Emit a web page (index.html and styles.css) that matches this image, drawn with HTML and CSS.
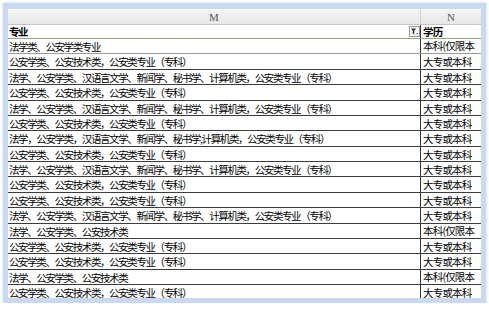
FILE: index.html
```html
<!DOCTYPE html>
<html lang="zh-CN">
<head>
<meta charset="utf-8">
<link rel="stylesheet" href="styles.css">
</head>
<body>
<div class="frame">
  <div class="sheet">
    <div class="row colhead">
      <div class="hcell hm">M</div>
      <div class="hcell hn">N</div>
    </div>
    <div class="row title">
      <div class="cell m">专业<span class="filter"><svg width="11" height="11" viewBox="0 0 11 11"><rect x="0.5" y="0.5" width="10" height="10" fill="#f3f3f3" stroke="#9a9a9a"/><path d="M2 2.5h5L5.2 5v3.5L3.8 7.6V5z" fill="#333"/><path d="M7.2 7.2h2.3L8.35 8.6z" fill="#444"/></svg></span></div>
      <div class="cell n">学历</div>
    </div>
    <div class="row light"><div class="cell m">法学类、公安学类专业</div><div class="cell n wrap">本科(仅限本科)</div></div>
    <div class="row"><div class="cell m">公安学类、公安技术类，公安类专业（专科）</div><div class="cell n">大专或本科</div></div>
    <div class="row"><div class="cell m">法学、公安学类、汉语言文学、新闻学、秘书学、计算机类，公安类专业（专科）</div><div class="cell n">大专或本科</div></div>
    <div class="row"><div class="cell m">公安学类、公安技术类，公安类专业（专科）</div><div class="cell n">大专或本科</div></div>
    <div class="row"><div class="cell m">法学、公安学类、汉语言文学、新闻学、秘书学、计算机类，公安类专业（专科）</div><div class="cell n">大专或本科</div></div>
    <div class="row"><div class="cell m">公安学类、公安技术类，公安类专业（专科）</div><div class="cell n">大专或本科</div></div>
    <div class="row"><div class="cell m">法学，公安学类，汉语言文学、新闻学、秘书学,计算机类，公安类专业（专科）</div><div class="cell n">大专或本科</div></div>
    <div class="row"><div class="cell m">公安学类、公安技术类，公安类专业（专科）</div><div class="cell n">大专或本科</div></div>
    <div class="row"><div class="cell m">法学、公安学类、汉语言文学、新闻学、秘书学、计算机类，公安类专业（专科）</div><div class="cell n">大专或本科</div></div>
    <div class="row"><div class="cell m">公安学类、公安技术类，公安类专业（专科）</div><div class="cell n">大专或本科</div></div>
    <div class="row"><div class="cell m">公安学类、公安技术类，公安类专业（专科）</div><div class="cell n">大专或本科</div></div>
    <div class="row"><div class="cell m">法学、公安学类、汉语言文学、新闻学、秘书学、计算机类，公安类专业（专科）</div><div class="cell n">大专或本科</div></div>
    <div class="row"><div class="cell m">法学、公安学类、公安技术类</div><div class="cell n wrap">本科(仅限本科)</div></div>
    <div class="row"><div class="cell m">公安学类、公安技术类，公安类专业（专科）</div><div class="cell n">大专或本科</div></div>
    <div class="row"><div class="cell m">公安学类、公安技术类，公安类专业（专科）</div><div class="cell n">大专或本科</div></div>
    <div class="row"><div class="cell m">法学、公安学类、公安技术类</div><div class="cell n wrap">本科(仅限本科)</div></div>
    <div class="row"><div class="cell m">公安学类、公安技术类，公安类专业（专科）</div><div class="cell n">大专或本科</div></div>
  </div>
</div>
</body>
</html>
```

FILE: styles.css
```css
html, body {
  margin: 0;
  background: #ffffff;
}

body {
  font-family: "Noto Sans CJK SC", "Liberation Sans", sans-serif;
  color: #000;
}

.frame {
  margin: 3px 0 0 3px;
  width: 483px;
  height: 300px;
  box-sizing: border-box;
  border: 5px solid #c8d9f1;
  border-top-width: 6px;
  background: #fff;
  overflow: hidden;
  box-shadow: 0 0 2px 1px #dfe8f7;
}

.sheet {
  display: flex;
  flex-direction: column;
}

.row {
  display: grid;
  grid-template-columns: 413px 60px;
  height: 15.375px;
  flex: none;
  box-sizing: border-box;
  border-bottom: 1px solid #3c3c3c;
}

.row.light {
  border-bottom-color: #9a9a9a;
}

.cell {
  font-size: 10.5px;
  line-height: 15px;
  overflow: hidden;
  white-space: nowrap;
}

.cell.m {
  padding-left: 1px;
  letter-spacing: -1.4px;
  border-right: 1px solid #333;
}

.cell.n {
  padding-left: 2px;
  letter-spacing: -0.8px;
}

.cell.wrap {
  white-space: normal;
  line-height: 12px;
  padding-top: 1px;
}

.colhead {
  height: 16px;
  border-top: 1px solid #fff;
  border-bottom: 1px solid #c4c4c4;
  background: linear-gradient(#f4f4f4, #e7e7e7);
}

.hcell {
  font-family: "Liberation Serif", serif;
  font-size: 11px;
  line-height: 14px;
  color: #555;
  text-align: center;
}

.hm {
  border-right: 1px solid #d0d0d0;
}

.title {
  height: 14px;
  border-bottom: 1px solid #95a57c;
}

.title .cell {
  font-weight: bold;
  line-height: 14px;
  color: #000;
}

.title .cell.m {
  position: relative;
}

.filter {
  position: absolute;
  right: 0;
  top: 1px;
  width: 11px;
  height: 11px;
  display: block;
}

.filter svg {
  display: block;
}
```
